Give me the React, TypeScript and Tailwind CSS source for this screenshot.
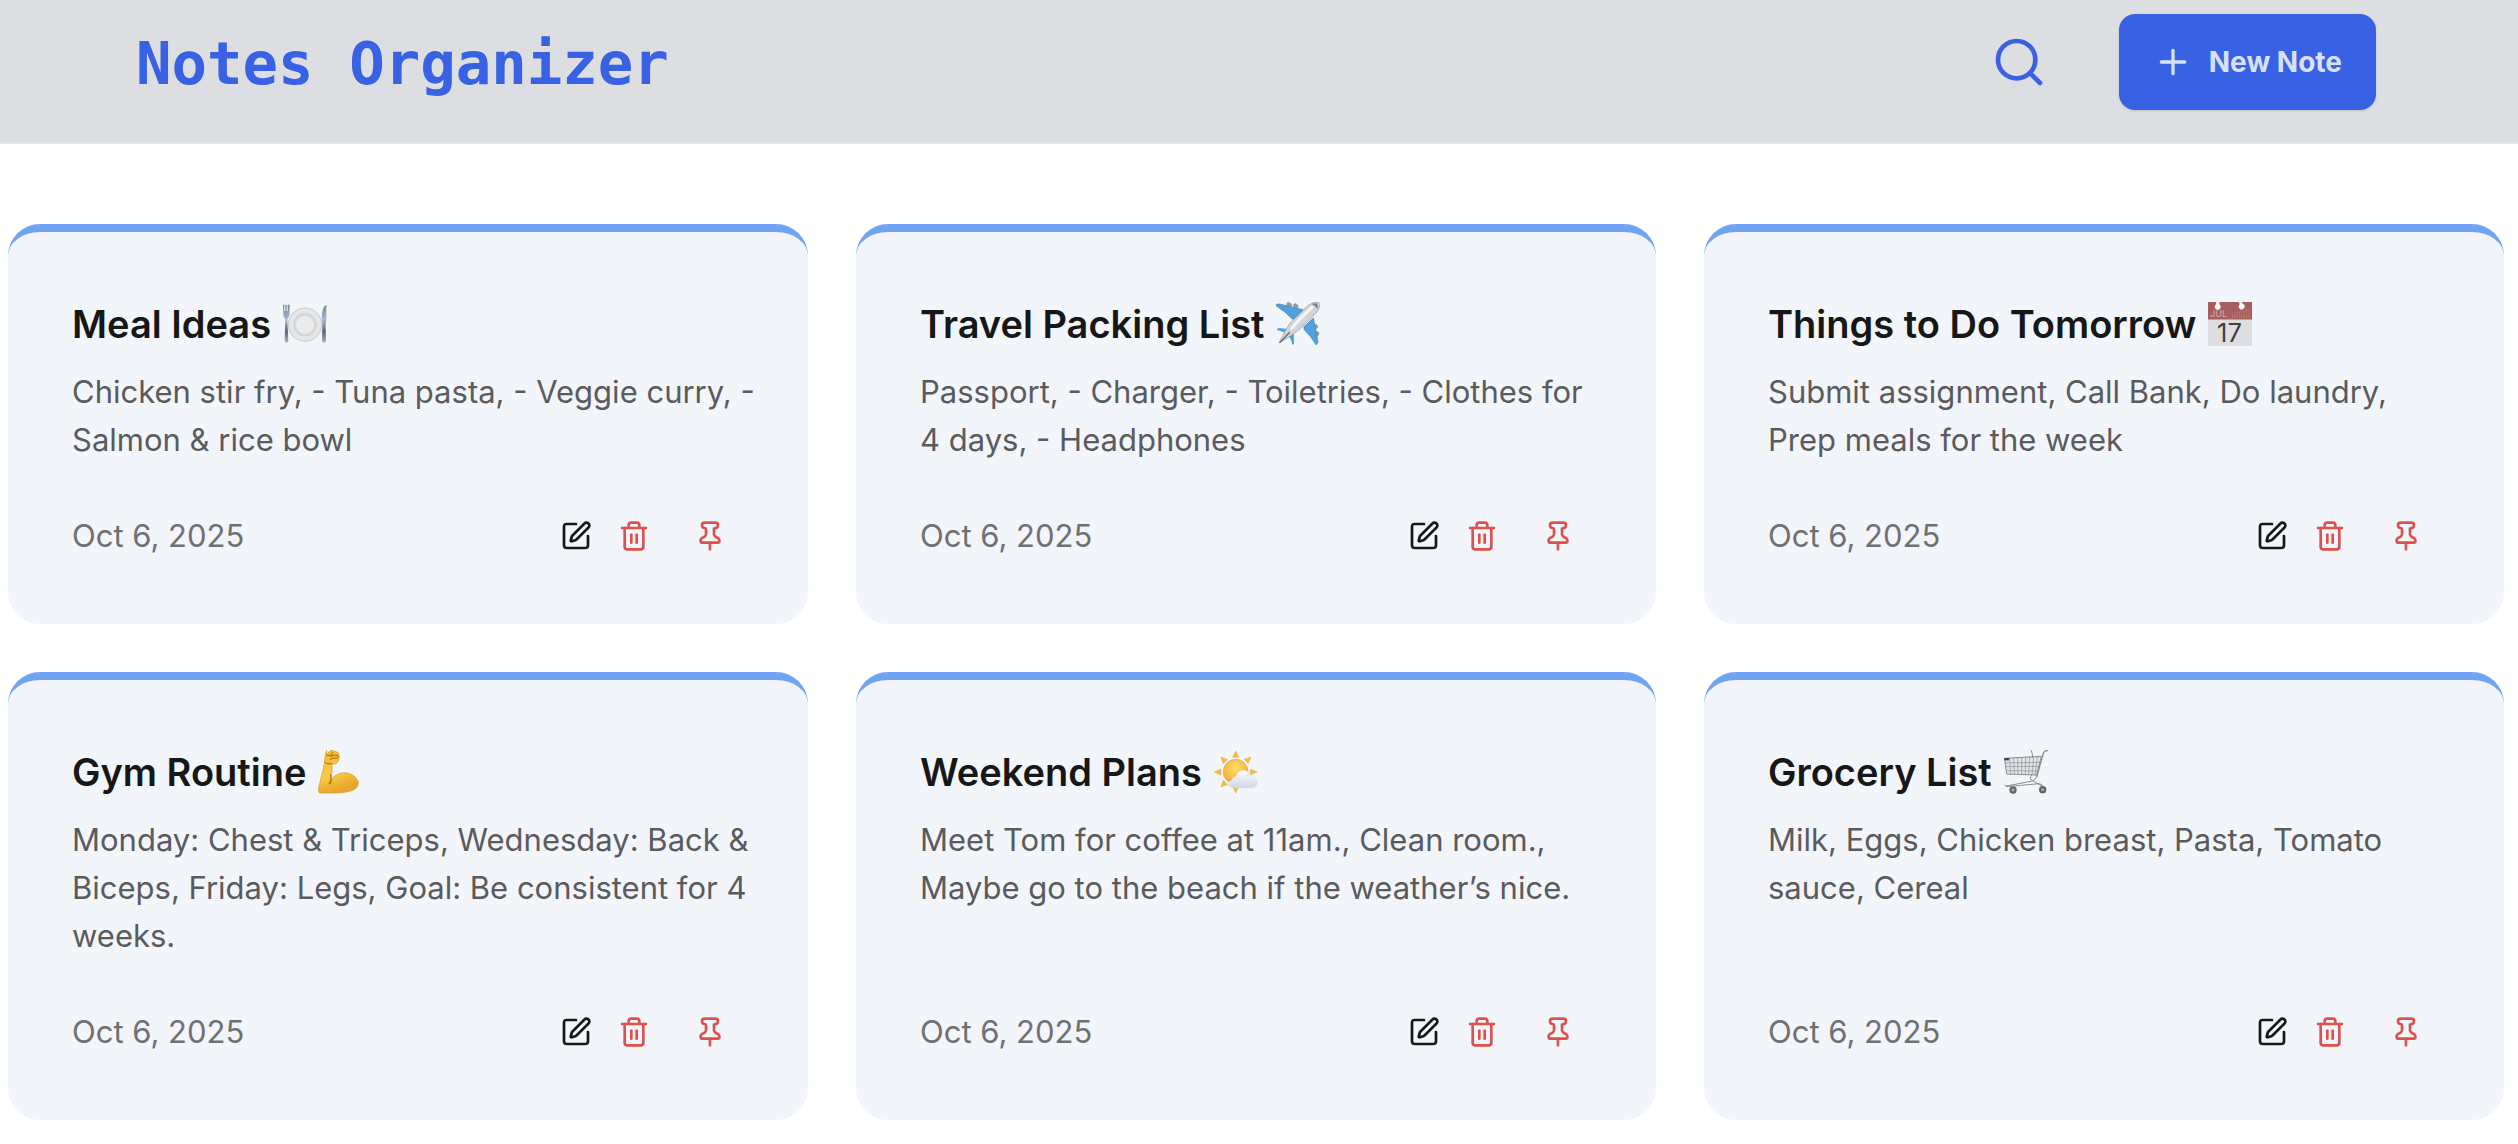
import React from "react";
import { Pin, Plus, Search, SquarePen, Trash2 } from "lucide-react";

function PlateIcon() {
  return (
    <svg role="img" aria-label="Plate with cutlery" viewBox="64 33 132 132" className="size-11 shrink-0">
      <defs>
        <linearGradient id="metal" x1="0" y1="0" x2="0" y2="1">
          <stop offset="0" stopColor="#7d838a" />
          <stop offset="0.4" stopColor="#a3b8d4" />
          <stop offset="0.7" stopColor="#5f646b" />
          <stop offset="1" stopColor="#a4b6cd" />
        </linearGradient>
      </defs>
      <path d="M64 41h3v19h2V41h3v19h2V41h3v19h2V41h5l-1 30q-1 9-6 12l3 68q-5 8-11 0l2-68q-6-3-6-12z" fill="url(#metal)" />
      <circle cx="130" cy="101" r="50" fill="#e6e6e7" stroke="#b4b7bb" strokeWidth="2" />
      <circle cx="130" cy="101" r="34" fill="#d8d9da" stroke="#c3c8cf" strokeWidth="2" />
      <circle cx="130" cy="102" r="27" fill="#ebebeb" />
      <path d="M104 119a31 31 0 0 0 24 14" fill="none" stroke="#b9d2f2" strokeWidth="3" />
      <path d="M194 41q-14 5-14 44l2 12-1 54q6 8 12 0l-1-52 2-8z" fill="url(#metal)" />
    </svg>
  );
}

function PlaneIcon() {
  return (
    <svg role="img" aria-label="Airplane" viewBox="69 33 132 132" className="size-11 shrink-0">
      <g fill="#96999f" stroke="#777b82" strokeWidth="1">
        <rect x="101" y="35" width="15" height="11" rx="4" transform="rotate(30 108 40)" />
        <rect x="121" y="39" width="15" height="11" rx="4" transform="rotate(30 128 44)" />
        <rect x="182" y="101" width="11" height="14" rx="4" transform="rotate(40 188 108)" />
        <rect x="184" y="121" width="13" height="14" rx="4" transform="rotate(40 190 128)" />
      </g>
      <path d="M70 40l9-1 72 17-25 28-8 0q-22-23-48-39z" fill="#4fa3dd" stroke="#3a80b5" strokeWidth="2" />
      <path d="M153 107l28-26 14 72-5 9q-17-27-37-47z" fill="#4fa3dd" stroke="#3a80b5" strokeWidth="2" />
      <path d="M72 114l6-3 32 4-5 15q-15-9-33-13z" fill="#4fa3dd" />
      <path d="M106 130l16-5 1 34-5 2q-2-16-13-28z" fill="#4f9ad0" />
      <path d="M78 156q20-42 34-61l54-52q14-12 31-9 7 13-5 29l-50 50q-24 20-64 43z" fill="#d3d4d8" stroke="#7f8289" strokeWidth="1.5" />
      <path d="M116 112q26-32 60-62" stroke="#f7f7f7" strokeWidth="9" strokeLinecap="round" fill="none" />
      <path d="M176 39q13-5 18 2 2 7-1 12-6-11-17-14z" fill="#777e87" />
      <path d="M80 155l30-31" stroke="#686d75" strokeWidth="4" />
    </svg>
  );
}

function CalendarIcon() {
  return (
    <svg role="img" aria-label="Calendar" viewBox="79 33 131 131" className="size-11 shrink-0 overflow-visible">
      <rect x="79" y="33" width="131" height="131" fill="#dedede" />
      <rect x="79" y="33" width="131" height="52" fill="#a65f5e" />
      <path d="M103 33h10v7a9 9 0 1 1-10 0zM170 33l4 6a9 9 0 1 0 9-1l-4-5z" fill="#fafafa" />
      <text x="85" y="79" fontSize="27" fontWeight="400" fill="#d8aeae" fontFamily="Inter, sans-serif">JUL</text>
      <path d="M152 80V65M159 80V64M166 80V62M173 80V60M180 80V58M187 80V57M194 80V54M201 80V52" stroke="#bd7b7a" strokeWidth="3" strokeDasharray="5 2" />
      <text x="143" y="151" fontSize="76" fontWeight="400" textAnchor="middle" fill="#3f4145" fontFamily="Inter, sans-serif">17</text>
    </svg>
  );
}

function ArmIcon() {
  return (
    <svg role="img" aria-label="Flexed biceps" viewBox="67 27 132 132" className="size-11 shrink-0">
      <defs>
        <linearGradient id="skin" x1="0" y1="0" x2="0.3" y2="1">
          <stop offset="0" stopColor="#efb632" />
          <stop offset="0.6" stopColor="#fbcb45" />
          <stop offset="1" stopColor="#e8a42c" />
        </linearGradient>
      </defs>
      <path
        d="M93 42Q99 30 109 28l15 5q8 3 7 14-1 17-11 21l-11 3q1 25-3 44 17-20 43-20 30 3 39 28 1 17-15 24-20 9-57 9H71q-4-5-2-17l15-60q0-7 3-13-2-10 6-38z"
        fill="url(#skin)"
        stroke="#d99a28"
        strokeWidth="2"
      />
      <path d="M94 43q14 3 17-8M104 46q12-6 22-3 4 4-1 8-12-2-21 4M88 65q9 6 20 3M105 101q3 15 0 26M106 117l-6 12" fill="none" stroke="#a9690f" strokeWidth="3" strokeLinecap="round" />
    </svg>
  );
}

function SunIcon() {
  return (
    <svg role="img" aria-label="Sun behind small cloud" viewBox="67 29 132 132" className="size-11 shrink-0">
      <defs>
        <radialGradient id="sun" cx="0.5" cy="0.35" r="0.65">
          <stop offset="0" stopColor="#ffe066" />
          <stop offset="1" stopColor="#f5a833" />
        </radialGradient>
        <linearGradient id="cloud" x1="0" y1="0" x2="0" y2="1">
          <stop offset="0" stopColor="#ffffff" />
          <stop offset="1" stopColor="#cdd7e4" />
        </linearGradient>
      </defs>
      <path
        d="M132 31l9 20h-18zM132 159l9-20h-18zM67 95l21-9v18zM197 95l-21-9v18zM87 50l21 7-13 13zM178 50l-21 7 13 13zM87 140l8-20 13 13z"
        fill="#f4bd3d"
        stroke="#dda647"
        strokeWidth="1"
      />
      <circle cx="132" cy="94" r="37" fill="url(#sun)" stroke="#eda439" strokeWidth="2" />
      <path
        d="M123 142q-12-1-12-11t10-11q1-10 11-10 4-20 22-20 16 0 19 14 12-2 16 9 8 3 8 12 0 15-15 17z"
        fill="url(#cloud)"
        stroke="#d3dae3"
        strokeWidth="1.5"
      />
      <path d="M132 113q8-2 13 5M160 109q7-5 13-4" fill="none" stroke="#dce3eb" strokeWidth="3" />
    </svg>
  );
}

function CartIcon() {
  return (
    <svg role="img" aria-label="Shopping cart" viewBox="69 27 132 132" className="size-11 shrink-0">
      <g fill="none" stroke="#8c8c90" strokeLinecap="round" strokeLinejoin="round">
        <path d="M72 52l109-6-14 56-89-3z" strokeWidth="3" fill="#e4e5e7" />
        <path d="M73 66l104-2M75 77l99-1M77 89l94 1" strokeWidth="2" />
        <path d="M86 51l3 48M98 51l2 48M110 50l1 50M122 50v50M134 49l-1 52M146 48l-3 53M158 48l-5 53M169 47l-7 55" strokeWidth="2" />
        <path d="M199 29q-9-1-13 11l-18 65" strokeWidth="4" />
        <path d="M151 29q4 8 4 20M152 102q-10 12 3 17l27 16M168 105q-3 12-14 15L82 134q-9 2-11-1" strokeWidth="3" />
        <path d="M76 137l99-9q9 0 12 12" strokeWidth="3" />
      </g>
      <rect x="70" y="51" width="14" height="7" fill="#2a4665" />
      <circle cx="96" cy="147" r="11" fill="#67615f" />
      <circle cx="96" cy="147" r="5" fill="#a9a5a3" />
      <circle cx="185" cy="146" r="11" fill="#67615f" />
      <circle cx="185" cy="146" r="5" fill="#a9a5a3" />
    </svg>
  );
}

type Note = { title: string; body: string; date: string; Icon: () => React.JSX.Element };

const notes: Note[] = [
  { title: "Meal Ideas", body: "Chicken stir fry, - Tuna pasta, - Veggie curry, - Salmon & rice bowl", date: "Oct 6, 2025", Icon: PlateIcon },
  { title: "Travel Packing List", body: "Passport, - Charger, - Toiletries, - Clothes for 4 days, - Headphones", date: "Oct 6, 2025", Icon: PlaneIcon },
  { title: "Things to Do Tomorrow", body: "Submit assignment, Call Bank, Do laundry, Prep meals for the week", date: "Oct 6, 2025", Icon: CalendarIcon },
  { title: "Gym Routine", body: "Monday: Chest & Triceps, Wednesday: Back & Biceps, Friday: Legs, Goal: Be consistent for 4 weeks.", date: "Oct 6, 2025", Icon: ArmIcon },
  { title: "Weekend Plans", body: "Meet Tom for coffee at 11am., Clean room., Maybe go to the beach if the weather’s nice.", date: "Oct 6, 2025", Icon: SunIcon },
  { title: "Grocery List", body: "Milk, Eggs, Chicken breast, Pasta, Tomato sauce, Cereal", date: "Oct 6, 2025", Icon: CartIcon },
];

function NoteCard({ title, body, date, Icon }: Note) {
  return (
    <article className="flex flex-col rounded-[32px] border-t-8 border-[#71a3f5] bg-[#f2f5fa] p-16">
      <h2 className="flex items-center gap-3 text-[38px] leading-[56px] font-semibold text-[#171717]">
        {title}
        <Icon />
      </h2>
      <p className="mt-4 -mr-3 text-[31px] leading-[48px] text-[#5b5b5d]">{body}</p>
      <footer className="mt-auto flex items-center justify-between pt-12">
        <time dateTime="2025-10-06" className="text-[31px] leading-[48px] text-[#707073]">
          {date}
        </time>
        <div className="flex items-center pr-[18px]">
          <button type="button" aria-label={`Edit ${title}`} className="text-[#171717]">
            <SquarePen className="size-8" />
          </button>
          <button type="button" aria-label={`Delete ${title}`} className="ml-[26px] text-[#dd524c]">
            <Trash2 className="size-8" />
          </button>
          <button type="button" aria-label={`Pin ${title}`} className="ml-11 text-[#dd524c]">
            <Pin className="size-8" />
          </button>
        </div>
      </footer>
    </article>
  );
}

export default function App() {
  return (
    <div className="bg-white font-['Inter',sans-serif]">
      <header className="flex items-center justify-between border-b-2 border-[#e4e6eb] bg-[#dcdee2] pt-3.5 pr-[142px] pb-8 pl-34">
        <h1 className="pt-1 font-['DejaVu_Sans_Mono',monospace] text-[59px] leading-[72px] font-bold text-[#3862e3]">Notes Organizer</h1>
        <div className="flex items-center gap-18">
          <button type="button" aria-label="Search notes" className="text-[#3862e3]">
            <Search className="size-14" />
          </button>
          <button
            type="button"
            className="flex h-24 items-center gap-4 rounded-2xl bg-[#3862e3] px-[34px] text-[28px] font-bold text-[#d7e1fd] shadow-sm"
          >
            <Plus className="size-10" />
            New Note
          </button>
        </div>
      </header>
      <main className="grid grid-cols-3 gap-12 pt-20 pr-3.5 pb-6 pl-2">
        {notes.map((note) => (
          <NoteCard key={note.title} {...note} />
        ))}
      </main>
    </div>
  );
}
